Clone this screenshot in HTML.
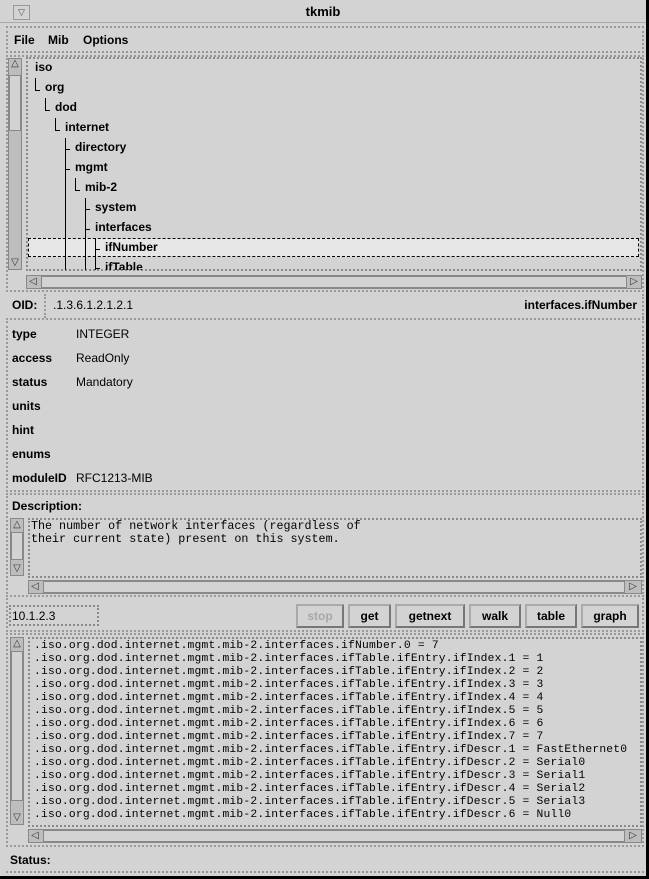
<!DOCTYPE html>
<html><head><style>
*{margin:0;padding:0;box-sizing:border-box}
body{width:649px;height:879px;background:#000;position:relative;overflow:hidden;font-family:"Liberation Sans",sans-serif;font-size:12px;color:#000}
.a{position:absolute}
.win{left:0;top:0;width:646px;height:876px;background:#d3d3d3}
.b{font-weight:bold}
.brd{border:2px dotted #8a8a8a}
.sb{background:#bdbdbd;border:1px solid #888}
.t{position:absolute;font-weight:bold;font-size:12px;line-height:14px}
.vl{position:absolute;width:1px;background:#000}
.hl{position:absolute;height:1px;background:#000}
.mono{font-family:"Liberation Mono",monospace;font-size:11.3px;line-height:13px;white-space:pre}
.btn{position:absolute;top:604px;height:24px;border:2px solid #aaa;border-right-color:#777;border-bottom-color:#777;font-weight:bold;text-align:center;line-height:20px;font-size:12px}
.arr{position:absolute;font-size:10px;line-height:12px;color:#333;text-align:center}
</style></head><body>
<div class="a win"></div>
<div class="a" style="left:0;top:0;width:646px;height:23px;border-bottom:1px solid #aaa"></div>
<div class="a" style="left:13px;top:5px;width:17px;height:15px;border:1px solid #999;font-size:9px;text-align:center;line-height:13px;color:#555">▽</div>
<div class="a b" style="left:0;width:646px;top:4px;text-align:center;font-size:13px">tkmib</div>
<div class="a" style="left:6px;top:26px;width:638px;height:27px;border:2px dotted #999"></div>
<div class="t" style="left:14px;top:33px">File</div>
<div class="t" style="left:48px;top:33px">Mib</div>
<div class="t" style="left:83px;top:33px">Options</div>
<!-- tree panel -->
<div class="a" style="left:6px;top:55px;width:638px;height:237px;border:2px dotted #999"></div>
<div class="a sb" style="left:8px;top:58px;width:14px;height:212px"></div>
<div class="a" style="left:9px;top:75px;width:12px;height:56px;background:#d3d3d3;border:1px solid #888"></div>
<div class="arr" style="left:8px;top:58px;width:14px">△</div>
<div class="arr" style="left:8px;top:257px;width:14px">▽</div>
<div class="a brd" style="left:26px;top:57px;width:616px;height:214px;border-width:2px"></div>
<div class="a" style="left:28px;top:238px;width:611px;height:19px;background:#e6e6e6;border:1px dashed #000"></div>
<div class="t" style="left:35px;top:60px">iso</div>
<div class="t" style="left:45px;top:80px">org</div>
<div class="t" style="left:55px;top:100px">dod</div>
<div class="t" style="left:65px;top:120px">internet</div>
<div class="t" style="left:75px;top:140px">directory</div>
<div class="t" style="left:75px;top:160px">mgmt</div>
<div class="t" style="left:85px;top:180px">mib-2</div>
<div class="t" style="left:95px;top:200px">system</div>
<div class="t" style="left:95px;top:220px">interfaces</div>
<div class="t" style="left:105px;top:240px">ifNumber</div>
<div class="t" style="left:105px;top:260px;height:10px;overflow:hidden">ifTable</div>
<div class="vl" style="left:35px;top:78px;height:13px"></div><div class="hl" style="left:35px;top:90px;width:5px"></div>
<div class="vl" style="left:45px;top:98px;height:13px"></div><div class="hl" style="left:45px;top:110px;width:5px"></div>
<div class="vl" style="left:55px;top:118px;height:13px"></div><div class="hl" style="left:55px;top:130px;width:5px"></div>
<div class="vl" style="left:65px;top:138px;height:132px"></div>
<div class="hl" style="left:65px;top:149px;width:5px"></div><div class="hl" style="left:65px;top:169px;width:5px"></div>
<div class="vl" style="left:75px;top:178px;height:13px"></div><div class="hl" style="left:75px;top:190px;width:5px"></div>
<div class="vl" style="left:85px;top:198px;height:72px"></div>
<div class="hl" style="left:85px;top:209px;width:5px"></div><div class="hl" style="left:85px;top:229px;width:5px"></div>
<div class="vl" style="left:95px;top:238px;height:32px"></div>
<div class="hl" style="left:95px;top:249px;width:5px"></div><div class="hl" style="left:95px;top:268px;width:5px"></div>
<div class="a sb" style="left:26px;top:275px;width:616px;height:14px"></div>
<div class="a" style="left:41px;top:276px;width:586px;height:12px;background:#d3d3d3;border:1px solid #888"></div>
<div class="arr" style="left:26px;top:276px;width:14px">◁</div>
<div class="arr" style="left:627px;top:276px;width:14px">▷</div>
<!-- OID -->
<div class="a" style="left:6px;top:294px;width:638px;height:26px;border-bottom:2px dotted #999"></div>
<div class="t" style="left:12px;top:298px">OID:</div>
<div class="a" style="left:44px;top:294px;width:600px;height:24px;border-left:2px dotted #999;border-right:2px dotted #999"></div>
<div class="a" style="left:53px;top:298px;font-size:12px">.1.3.6.1.2.1.2.1</div>
<div class="t" style="right:12px;top:298px">interfaces.ifNumber</div>
<!-- info -->
<div class="a" style="left:6px;top:321px;width:638px;height:171px;border:2px dotted #999;border-top:none"></div>
<div class="t" style="left:12px;top:327px">type</div><div class="a" style="left:76px;top:327px">INTEGER</div>
<div class="t" style="left:12px;top:351px">access</div><div class="a" style="left:76px;top:351px">ReadOnly</div>
<div class="t" style="left:12px;top:375px">status</div><div class="a" style="left:76px;top:375px">Mandatory</div>
<div class="t" style="left:12px;top:399px">units</div>
<div class="t" style="left:12px;top:423px">hint</div>
<div class="t" style="left:12px;top:447px">enums</div>
<div class="t" style="left:12px;top:471px">moduleID</div><div class="a" style="left:76px;top:471px">RFC1213-MIB</div>
<!-- description -->
<div class="a" style="left:6px;top:493px;width:638px;height:104px;border:2px dotted #999"></div>
<div class="t" style="left:12px;top:499px">Description:</div>
<div class="a sb" style="left:10px;top:518px;width:14px;height:58px"></div>
<div class="a" style="left:11px;top:532px;width:12px;height:28px;background:#d3d3d3;border:1px solid #888"></div>
<div class="arr" style="left:10px;top:519px;width:14px">△</div>
<div class="arr" style="left:10px;top:563px;width:14px">▽</div>
<div class="a brd" style="left:28px;top:518px;width:614px;height:60px"></div>
<div class="a mono" style="left:31px;top:520px;font-size:11.7px;line-height:13px">The number of network interfaces (regardless of
their current state) present on this system.</div>
<div class="a sb" style="left:28px;top:580px;width:614px;height:14px"></div>
<div class="a" style="left:43px;top:581px;width:582px;height:12px;background:#d3d3d3;border:1px solid #888"></div>
<div class="arr" style="left:28px;top:581px;width:14px">◁</div>
<div class="arr" style="left:626px;top:581px;width:14px">▷</div>
<!-- entry row -->
<div class="a" style="left:6px;top:598px;width:638px;height:34px;border:2px dotted #999;border-top:none"></div>
<div class="a brd" style="left:9px;top:605px;width:90px;height:21px"></div>
<div class="a" style="left:12px;top:609px">10.1.2.3</div>
<div class="btn" style="left:296px;width:48px;color:#a8a8a8">stop</div>
<div class="btn" style="left:348px;width:43px">get</div>
<div class="btn" style="left:395px;width:70px">getnext</div>
<div class="btn" style="left:469px;width:52px">walk</div>
<div class="btn" style="left:525px;width:52px">table</div>
<div class="btn" style="left:581px;width:58px">graph</div>
<!-- output -->
<div class="a" style="left:6px;top:633px;width:638px;height:214px;border:2px dotted #999"></div>
<div class="a sb" style="left:10px;top:637px;width:14px;height:188px"></div>
<div class="a" style="left:11px;top:651px;width:12px;height:150px;background:#d3d3d3;border:1px solid #888"></div>
<div class="arr" style="left:10px;top:638px;width:14px">△</div>
<div class="arr" style="left:10px;top:812px;width:14px">▽</div>
<div class="a brd" style="left:28px;top:637px;width:614px;height:190px"></div>
<div class="a mono" style="left:34px;top:640px;letter-spacing:0.2px">.iso.org.dod.internet.mgmt.mib-2.interfaces.ifNumber.0 = 7
.iso.org.dod.internet.mgmt.mib-2.interfaces.ifTable.ifEntry.ifIndex.1 = 1
.iso.org.dod.internet.mgmt.mib-2.interfaces.ifTable.ifEntry.ifIndex.2 = 2
.iso.org.dod.internet.mgmt.mib-2.interfaces.ifTable.ifEntry.ifIndex.3 = 3
.iso.org.dod.internet.mgmt.mib-2.interfaces.ifTable.ifEntry.ifIndex.4 = 4
.iso.org.dod.internet.mgmt.mib-2.interfaces.ifTable.ifEntry.ifIndex.5 = 5
.iso.org.dod.internet.mgmt.mib-2.interfaces.ifTable.ifEntry.ifIndex.6 = 6
.iso.org.dod.internet.mgmt.mib-2.interfaces.ifTable.ifEntry.ifIndex.7 = 7
.iso.org.dod.internet.mgmt.mib-2.interfaces.ifTable.ifEntry.ifDescr.1 = FastEthernet0
.iso.org.dod.internet.mgmt.mib-2.interfaces.ifTable.ifEntry.ifDescr.2 = Serial0
.iso.org.dod.internet.mgmt.mib-2.interfaces.ifTable.ifEntry.ifDescr.3 = Serial1
.iso.org.dod.internet.mgmt.mib-2.interfaces.ifTable.ifEntry.ifDescr.4 = Serial2
.iso.org.dod.internet.mgmt.mib-2.interfaces.ifTable.ifEntry.ifDescr.5 = Serial3
.iso.org.dod.internet.mgmt.mib-2.interfaces.ifTable.ifEntry.ifDescr.6 = Null0</div>
<div class="a sb" style="left:28px;top:829px;width:614px;height:14px"></div>
<div class="a" style="left:43px;top:830px;width:582px;height:12px;background:#d3d3d3;border:1px solid #888"></div>
<div class="arr" style="left:28px;top:830px;width:14px">◁</div>
<div class="arr" style="left:626px;top:830px;width:14px">▷</div>
<!-- status -->
<div class="a" style="left:6px;top:848px;width:638px;height:25px;border-bottom:2px dotted #999"></div>
<div class="t" style="left:10px;top:853px">Status:</div>
</body></html>
